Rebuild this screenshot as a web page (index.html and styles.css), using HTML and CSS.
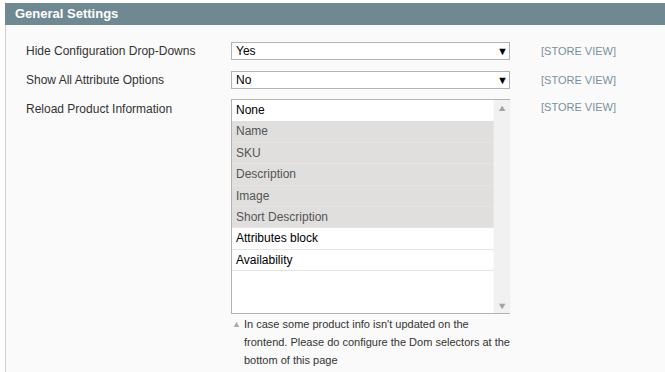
FILE: index.html
```html
<!DOCTYPE html>
<html lang="en">
<head>
<meta charset="UTF-8" /><meta name="viewport" content="width=device-width,initial-scale=1" />
<title>General Settings</title>
<link rel="stylesheet" href="styles.css">
</head>
<body>
  <section class="fieldset">
    <h2 class="fieldset-head">General Settings</h2>
    <div class="fieldset-body">
      <div class="row">
        <label class="label">Hide Configuration Drop-Downs</label>
        <div class="value"><div class="select">Yes<span class="arrow">&#9660;</span></div></div>
        <div class="scope">[STORE VIEW]</div>
      </div>
      <div class="row row-tight">
        <label class="label">Show All Attribute Options</label>
        <div class="value"><div class="select">No<span class="arrow">&#9660;</span></div></div>
        <div class="scope">[STORE VIEW]</div>
      </div>
      <div class="row">
        <label class="label label-multi">Reload Product Information</label>
        <div class="value">
          <div class="multiselect">
            <ul class="options">
              <li>None</li>
              <li class="sel">Name</li>
              <li class="sel">SKU</li>
              <li class="sel">Description</li>
              <li class="sel">Image</li>
              <li class="sel">Short Description</li>
              <li>Attributes block</li>
              <li>Availability</li>
            </ul>
            <div class="scrollbar"><span class="up">&#9650;</span><span class="down">&#9660;</span></div>
          </div>
          <p class="note">In case some product info isn't updated on the frontend. Please do configure the Dom selectors at the bottom of this page</p>
        </div>
        <div class="scope scope-multi">[STORE VIEW]</div>
      </div>
    </div>
  </section>
</body>
</html>
```
FILE: styles.css
```css
*,*::before,*::after{box-sizing:border-box;}
body {
  margin:0;padding:3px 0 0 5px;background:#fff;
  font-family:'Liberation Sans',Arial,sans-serif;font-size:12px;color:#2f2f2f;
}
.fieldset-head {
  margin:0;height:22px;line-height:22px;padding-left:10px;background:#6f8992;
  color:#fff;font-size:13px;font-weight:700;
}
.fieldset-body {
  background:#fafafa;border-left:1px solid #d3d3d3;padding:17px 0 20px 20px;min-height:360px;
}
.row {
  display:flex;align-items:flex-start;margin-bottom:11px;
}
.row-tight {margin-bottom:10px;}
.row:last-child {margin-bottom:0;}
.label {
  width:205px;line-height:18px;color:#333;
}
.label-multi {padding-top:1px;}
.value {width:279px;}
.select {
  height:18px;border:1px solid #b3b3b3;background:#fff;padding:0 0 0 4px;line-height:16px;
  color:#000;display:flex;justify-content:space-between;align-items:center;
}
.arrow {font-size:11px;width:12px;line-height:16px;}
.scope {
  margin-left:31px;font-size:11px;line-height:18px;color:#7891a0;
}
.scope-multi {line-height:17px;}
.multiselect {
  height:215px;border:1px solid #b3b3b3;background:#fff;display:flex;
}
.options {
  list-style:none;margin:0;padding:0;flex:1;
}
.options li {
  height:21.4px;line-height:20px;padding-left:4px;border-bottom:1px solid #e4e4e4;color:#000;
}
.options li.sel {background:#e0dfdd;color:#555;border-bottom-color:#e6e5e3;}
.options li:first-child {border-bottom:0;}
.scrollbar {
  width:14px;background:#f1f1f1;display:flex;flex-direction:column;justify-content:space-between;
  align-items:center;color:#a3a3a3;font-size:9px;padding:3px 0 2px;transform:scaleX(1.2);
}
.note {
  margin:1px 0 0;padding-left:13px;font-size:11px;line-height:18px;color:#333;position:relative;
}
.note::before {
  content:'\25B2';position:absolute;left:1px;top:0;font-size:9px;color:#a9a9a9;
}
```
